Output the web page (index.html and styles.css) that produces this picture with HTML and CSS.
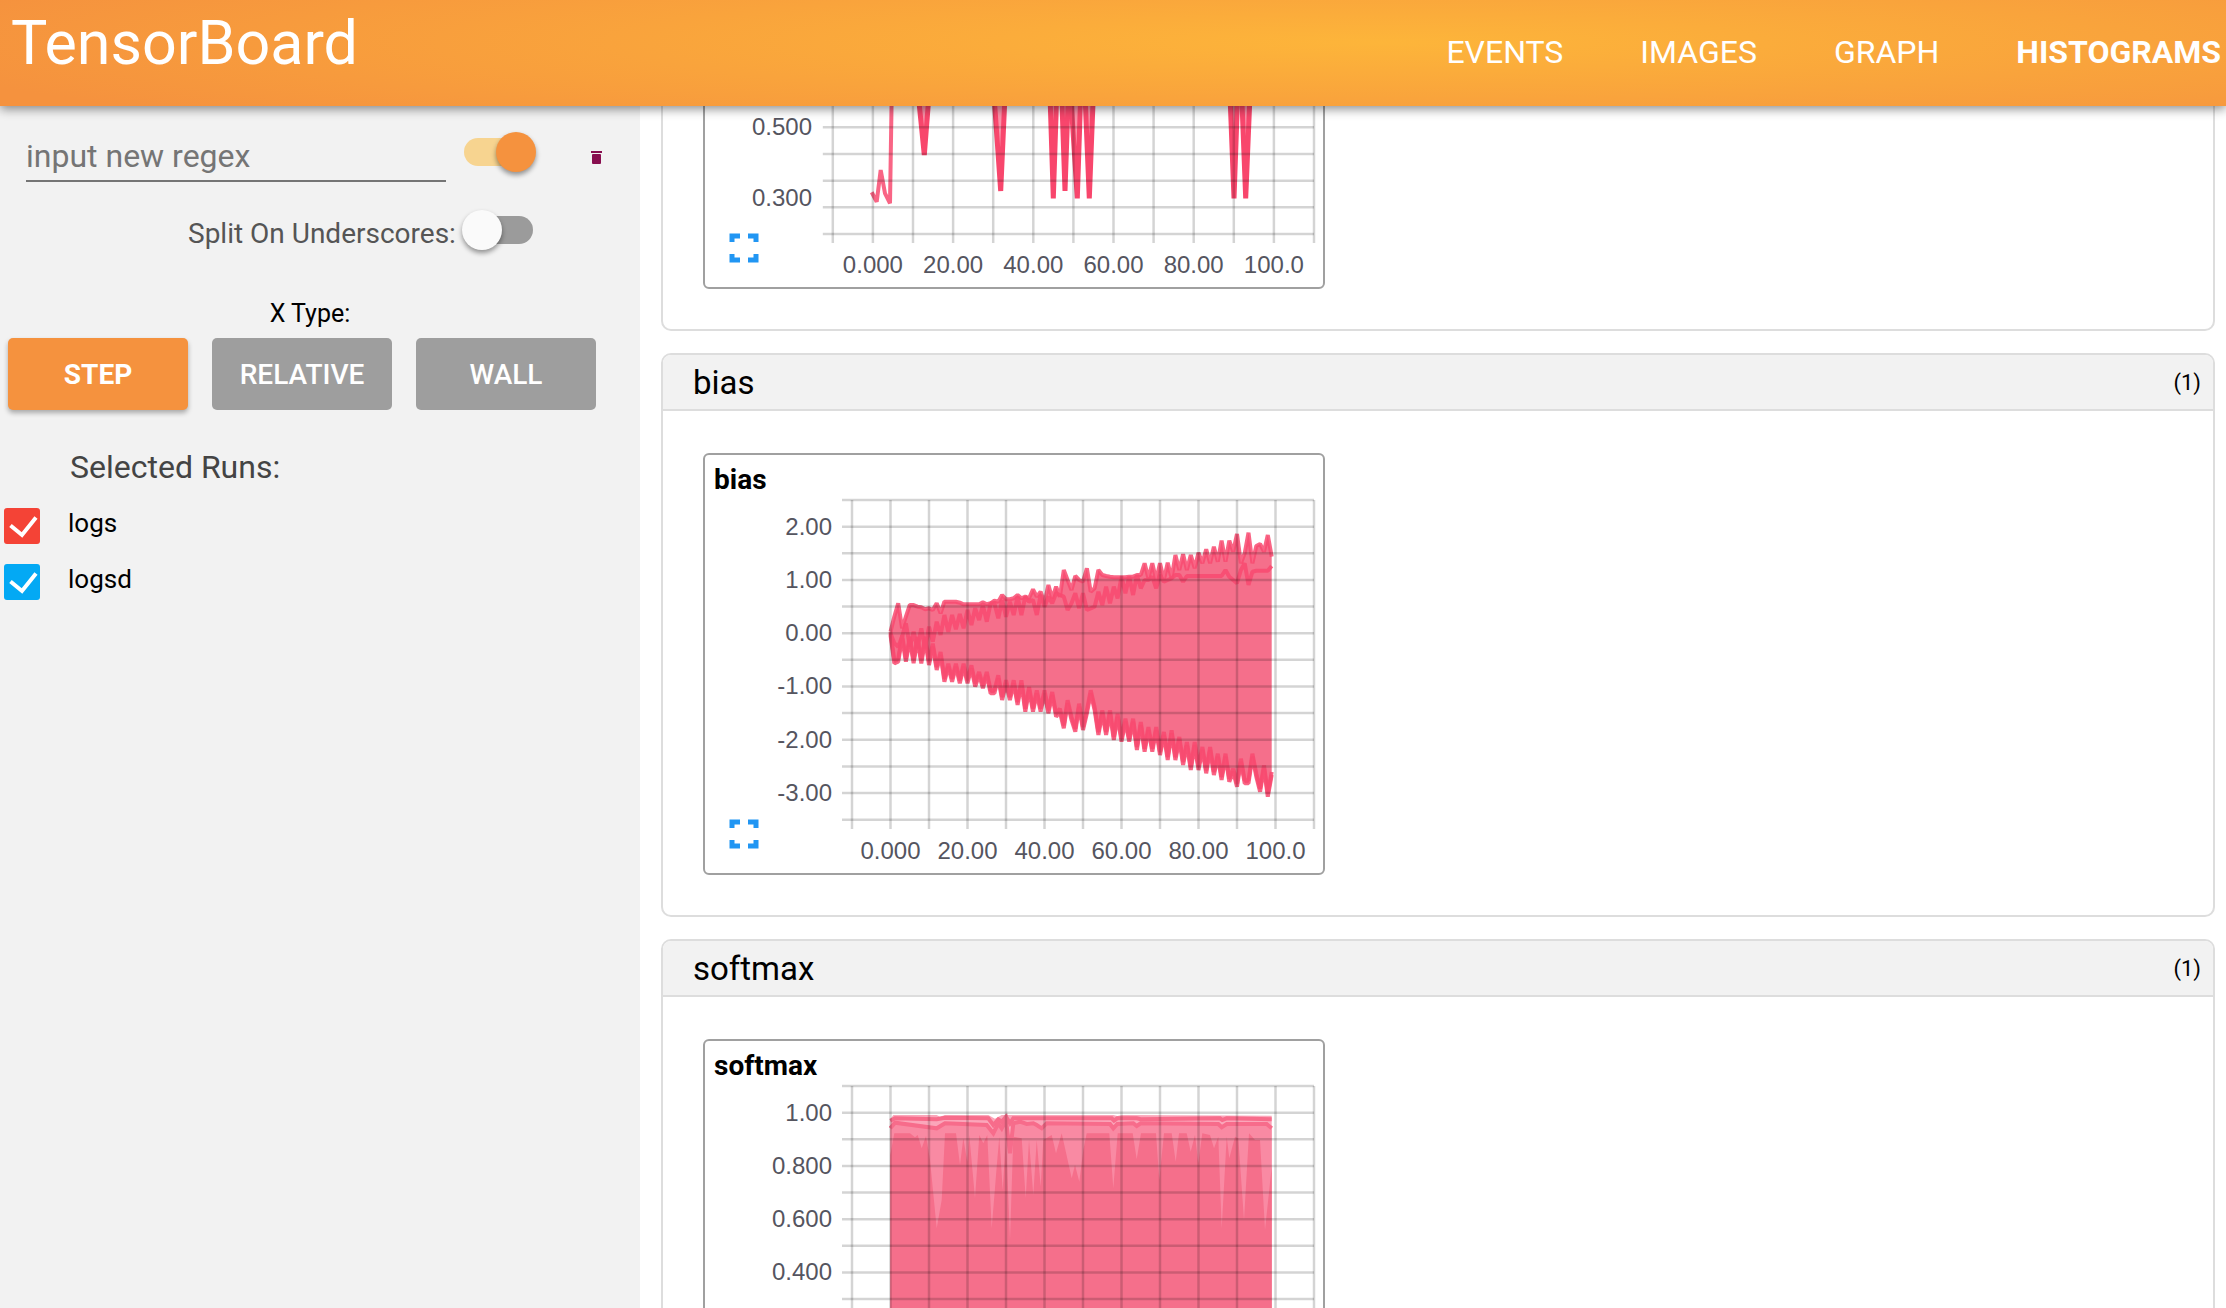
FILE: index.html
```html
<!DOCTYPE html>
<html lang="en">
<head>
    <meta charset="UTF-8">
    <title>TensorBoard</title>
    <link rel="stylesheet" href="styles.css">
</head>
<body>

    <header class="topbar">
        <div class="brand">TensorBoard</div>
        <nav class="tabs">
            <a class="tab">EVENTS</a>
            <a class="tab">IMAGES</a>
            <a class="tab">GRAPH</a>
            <a class="tab tab-active">HISTOGRAMS</a>
        </nav>
    </header>

    <div class="page">
        <aside class="sidebar">
            <div class="regex-row">
                <div class="regex-input">input new regex</div>
                <div class="toggle toggle-on"><span class="knob"></span></div>
                <svg class="trash" width="11" height="13" viewBox="0 0 11 13">
                    <rect x="0" y="0" width="11" height="2"></rect>
                    <rect x="1" y="3" width="9" height="10" rx="1"></rect>
                </svg>
            </div>
            <div class="split-row">
                <span class="split-label">Split On Underscores:</span>
                <div class="toggle"><span class="knob"></span></div>
            </div>
            <div class="xtype-label">X Type:</div>
            <div class="xtype-buttons">
                <button class="xtype-button xtype-active">STEP</button>
                <button class="xtype-button">RELATIVE</button>
                <button class="xtype-button">WALL</button>
            </div>
            <div class="runs-title">Selected Runs:</div>
            <div class="run">
                <span class="checkbox checkbox-red">
                    <svg width="36" height="36" viewBox="0 0 36 36"><path d="M6.5 17.5L18 27L32 9.5"></path></svg>
                </span>
                <span class="run-name">logs</span>
            </div>
            <div class="run">
                <span class="checkbox checkbox-blue">
                    <svg width="36" height="36" viewBox="0 0 36 36"><path d="M6.5 17.5L18 27L32 9.5"></path></svg>
                </span>
                <span class="run-name">logsd</span>
            </div>
        </aside>

        <main class="content">
            <!-- scrolled under the top bar, only the lower part of this one shows -->
            <section class="category category-cut">
                <div class="category-body">
                    <div class="card">
                        <svg class="plot" id="plot-top" viewBox="0 187 618 189"></svg>
                    </div>
                </div>
            </section>

            <section class="category">
                <div class="category-head"><span>bias</span><span class="count">(1)</span></div>
                <div class="category-body">
                    <div class="card">
                        <div class="card-title">bias</div>
                        <svg class="plot" id="plot-bias" viewBox="0 0 618 376"></svg>
                    </div>
                </div>
            </section>

            <section class="category">
                <div class="category-head"><span>softmax</span><span class="count">(1)</span></div>
                <div class="category-body">
                    <div class="card">
                        <div class="card-title">softmax</div>
                        <svg class="plot" id="plot-softmax" viewBox="0 0 618 376"></svg>
                    </div>
                </div>
            </section>
        </main>
    </div>

    <script src="chart.js"></script>
</body>
</html>
```

FILE: styles.css
```css
html, body {
    margin: 0;
    height: 100%;
    overflow: hidden;
    font-family: Roboto, "Noto Sans", sans-serif;
    background-color: #fff;
}
.topbar {
    position: relative;
    z-index: 2;
    display: flex;
    height: 106px;
    color: #fff;
    background: radial-gradient(ellipse 1500px 115px at 62% 40%, #fdb53a, #f5923e);
    box-shadow: 0 3px 10px rgba(0, 0, 0, 0.45);
}
.brand {
    margin-left: 11px;
    font-size: 61px;
    line-height: 86px;
}
.tabs {
    display: flex;
    gap: 77px;
    margin-left: auto;
    padding-right: 5px;
}
.tab {
    font-size: 32px;
    line-height: 105px;
}
.tab-active {
    font-weight: 700;
}
.page {
    display: flex;
    height: 1202px;
}
.sidebar {
    flex: none;
    width: 640px;
    box-sizing: border-box;
    padding-top: 26px;
    background-color: #f2f2f2;
}
.regex-row {
    display: flex;
    align-items: flex-start;
    padding-left: 26px;
}
.regex-input {
    box-sizing: border-box;
    width: 420px;
    height: 50px;
    border-bottom: 2px solid #757575;
    margin-right: 18px;
    font-size: 32px;
    line-height: 48px;
    color: #757575;
}
.toggle {
    position: relative;
    flex: none;
    width: 70px;
    height: 28px;
    border-radius: 14px;
    background-color: #9b9b9b;
}
.knob {
    position: absolute;
    top: -6px;
    left: -1px;
    width: 40px;
    height: 40px;
    border-radius: 50%;
    background-color: #fafafa;
    box-shadow: 0 3px 5px rgba(0, 0, 0, 0.4);
}
.regex-row .toggle {
    margin-top: 6px;
}
.toggle-on {
    background-color: #f7d490;
}
.toggle-on .knob {
    left: 32px;
    background-color: #f5923e;
}
.trash {
    margin: 19px 0 0 57px;
    fill: #880e4f;
}
.split-row {
    display: flex;
    align-items: center;
    height: 56px;
    margin-top: 20px;
    padding-left: 188px;
}
.split-label {
    margin-right: 7px;
    padding-top: 7px;
    font-size: 28px;
    color: #555;
}
.xtype-label {
    width: 620px;
    margin-top: 41px;
    font-size: 25px;
    line-height: 30px;
    text-align: center;
    color: #000;
}
.xtype-buttons {
    display: flex;
    gap: 24px;
    margin-top: 9px;
    padding-left: 8px;
}
.xtype-button {
    width: 180px;
    height: 72px;
    border: none;
    border-radius: 5px;
    padding: 0;
    font-family: inherit;
    font-size: 28px;
    font-weight: 500;
    color: #fff;
    background-color: #9e9e9e;
}
.xtype-active {
    font-weight: 700;
    background-color: #f5923e;
    box-shadow: 0 3px 5px rgba(0, 0, 0, 0.3);
}
.runs-title {
    margin: 37px 0 21px 70px;
    font-size: 32px;
    line-height: 40px;
    color: #444;
}
.run {
    display: flex;
    gap: 28px;
    margin: 0 0 20px 4px;
}
.checkbox {
    display: block;
    width: 36px;
    height: 36px;
    border-radius: 3px;
}
.checkbox svg {
    display: block;
    fill: none;
    stroke: #fff;
    stroke-width: 4;
}
.checkbox-red {
    background-color: #f44336;
}
.checkbox-blue {
    background-color: #03a9f4;
}
.run-name {
    font-size: 26px;
    line-height: 30px;
    color: #000;
}
.content {
    flex: 1;
    min-width: 0;
    padding: 0 11px 0 21px;
    overflow: hidden;
}
.category {
    border: 2px solid #ddd;
    border-radius: 10px;
    margin-bottom: 22px;
}
.category-cut {
    margin-top: -20px;
}
.category-head {
    display: flex;
    align-items: center;
    justify-content: space-between;
    box-sizing: border-box;
    height: 56px;
    padding: 0 12px 0 30px;
    border-bottom: 2px solid #ddd;
    border-radius: 8px 8px 0 0;
    font-size: 33px;
    color: #000;
    background-color: #f2f2f2;
}
.count {
    font-size: 22px;
}
.category-body {
    padding: 42px 0 40px 40px;
}
.category-cut .category-body {
    padding-top: 8px;
}
.card {
    box-sizing: border-box;
    width: 622px;
    height: 422px;
    border: 2px solid #a0a0a0;
    border-radius: 6px;
    background-color: #fff;
}
.category-cut .card {
    height: 193px;
}
.card-title {
    height: 42px;
    padding-left: 9px;
    font-size: 28px;
    font-weight: 700;
    line-height: 50px;
    color: #000;
}
.plot {
    display: block;
    width: 618px;
    height: 376px;
}
.category-cut .plot {
    height: 189px;
}
.grid-line {
    stroke: rgba(0, 0, 0, 0.17);
    stroke-width: 2.5;
}
.tick-label {
    font-family: "Liberation Sans", Arial, sans-serif;
    font-size: 24px;
    fill: #55555f;
}
.area {
    fill: #f56f8b;
}
.trace {
    fill: none;
    stroke: #f84a70;
    stroke-width: 4;
    stroke-linejoin: bevel;
    opacity: 0.85;
}
.dip {
    fill: rgba(248, 74, 112, 0.6);
    stroke: #f8466c;
    stroke-width: 5;
    stroke-linejoin: bevel;
}
.soft-top {
    fill: #fba6ba;
}
.soft-mid {
    fill: #f98aa3;
}
.soft-line {
    fill: none;
    stroke: #f76c8b;
    stroke-width: 4;
}
.expand {
    fill: none;
    stroke: #2196f3;
    stroke-width: 5;
}
```

FILE: chart.js
```javascript
// values below are pixel readings taken at 3x, so they get divided by 3 here
function traced(pts, ox, oy) {
    return pts.map(function(p) {
        return (ox + p[0] / 3).toFixed(1) + ',' + (oy + p[1] / 3).toFixed(1);
    }).join(' ');
}

function series(vals, firstIndex, oy) {
    return vals.map(function(v, i) {
        return [(firstIndex + i) * 3.85, oy + v / 3];
    });
}

function toPoints(list) {
    return list.map(function(p) {
        return (185.5 + p[0]).toFixed(1) + ',' + p[1].toFixed(1);
    }).join(' ');
}

function drawGrid(opts) {
    let out = '';
    for (let k = 0; k <= 12; k++) {
        const x = opts.left + k * opts.stepX;
        out += `<line class="grid-line" x1="${x}" x2="${x}" y1="3" y2="332"></line>`;
    }
    for (let k = 0; k <= 12; k++) {
        const y = 3 + k * opts.stepY;
        out += `<line class="grid-line" x1="${opts.left - 10}" x2="${opts.left + 12 * opts.stepX}" y1="${y}" y2="${y}"></line>`;
    }
    return out;
}

function drawYLabels(opts) {
    let out = '';
    opts.yLabels.forEach(function(text, i) {
        const y = 3 + (i * 2 + 1) * opts.stepY + 8;
        out += `<text class="tick-label" text-anchor="end" x="${opts.left - 20}" y="${y}">${text}</text>`;
    });
    return out;
}

function drawXAxis(opts) {
    let out = '';
    ['0.000', '20.00', '40.00', '60.00', '80.00', '100.0'].forEach(function(text, i) {
        const x = opts.left + (i * 2 + 1) * opts.stepX;
        out += `<text class="tick-label" text-anchor="middle" x="${x}" y="362">${text}</text>`;
    });
    out += '<path class="expand" d="M27 331V325H35M43 325H51V331M51 343V349H43M35 349H27V343"></path>';
    return out;
}

function topChart() {
    const ox = 145, oy = 194;
    const dips = [
        [[205, -30], [223, 150], [237, -30]],
        [[432, -30], [452, 258], [465, -30]],
        [[600, -30], [610, 280], [620, -30]],
        [[635, -30], [645, 258], [655, -30]],
        [[662, -30], [682, 280], [692, -30]],
        [[705, -30], [718, 280], [730, -30]],
        [[1140, -30], [1152, 280], [1163, -30]],
        [[1175, -30], [1187, 280], [1200, -30]]
    ];
    const opts = { left: 127.8, stepX: 40.1, stepY: 26.67 };
    let out = '';
    out += `<polyline class="trace" points="${traced([[65, 262], [80, 290], [92, 195], [105, 265], [120, 295], [125, -30]], ox, oy)}"></polyline>`;
    dips.forEach(function(d) {
        out += `<polygon class="dip" points="${traced(d, ox, oy)}"></polygon>`;
    });
    out += drawGrid(opts);
    out += drawXAxis(opts);
    out += '<text class="tick-label" text-anchor="end" x="107" y="224">0.500</text>';
    out += '<text class="tick-label" text-anchor="end" x="107" y="295">0.300</text>';
    document.getElementById('plot-top').innerHTML = out;
}

// bias
function biasChart() {
    const upper = series([215, 170, 130, 205, 170, 135, 135, 140, 142, 148, 145, 150, 130, 160, 125, 125, 125, 125, 128, 133, 133, 133, 133, 133, 127, 133, 130, 122, 125, 105, 118, 118, 115, 105, 115, 110, 115, 88, 110, 95, 130, 75, 115, 80, 110, 30, 60, 90, 48, 60, 65], 0, 63)
        .concat(series([145, 215, 205, 150, 165, 168, 170, 172, 172, 172, 172, 170, 170, 165, 165, 130, 175, 130, 180, 130, 180, 128, 175, 105, 150, 103, 150, 105, 145, 98, 130, 88, 130, 80, 125, 62, 125, 62, 95, 42, 130, 100, 38, 130, 78, 72, 95, 45, 110], 51, 23));
    const inner = series([220, 250, 260, 230, 190, 260, 215, 265, 205, 265, 200, 245, 185, 225, 165, 215, 165, 208, 162, 205, 150, 195, 145, 180, 135, 185, 130, 130, 175, 120, 170, 125, 165, 110, 165, 110, 125, 120, 165, 105, 140, 110, 130, 100, 105, 110, 150, 130, 100, 145, 100, 150], 0, 63)
        .concat(series([265, 260, 215, 255, 200, 250, 200, 235, 170, 220, 170, 225, 165, 205, 180, 180, 170, 205, 165, 185, 180, 175, 165, 165, 185, 168, 168, 168, 168, 168, 168, 168, 168, 168, 168, 150, 170, 180, 190, 150, 130, 195, 155, 152, 152, 152, 152, 138], 52, 23));
    const lower = series([225, 310, 305, 235, 305, 240, 310, 240, 310, 240, 315, 260, 330, 285, 365, 320, 365, 320, 370, 320, 370, 325, 380, 345, 385, 345, 400, 400, 355, 420, 370, 420, 370, 435, 370, 455, 390, 455, 400, 455, 400, 460, 405, 470, 455, 505, 430, 480, 515, 440], 0, 63)
        .concat(series([210, 160, 100, 150, 225, 160, 225, 160, 240, 170, 245, 185, 245, 185, 270, 195, 275, 210, 275, 210, 285, 225, 300, 220, 300, 240, 315, 255, 330, 255, 330, 270, 340, 270, 345, 290, 360, 290, 365, 335, 380, 305, 370, 370, 290, 350, 395, 325, 410, 345], 50, 163));
    const lowerInner = lower.map(function(p) {
        return [p[0], p[1] - 3];
    });
    const opts = {
        left: 147, stepX: 38.5, stepY: 26.64,
        yLabels: ['2.00', '1.00', '0.00', '-1.00', '-2.00', '-3.00']
    };
    let out = '';
    out += `<polygon class="area" points="${toPoints(upper.concat(lower.slice().reverse()))}"></polygon>`;
    out += `<polyline class="trace" points="${toPoints(upper)}"></polyline>`;
    out += `<polyline class="trace" points="${toPoints(inner)}"></polyline>`;
    out += `<polyline class="trace" points="${toPoints(lower)}"></polyline>`;
    out += `<polyline class="trace" points="${toPoints(lowerInner)}"></polyline>`;
    out += drawGrid(opts);
    out += drawYLabels(opts);
    out += drawXAxis(opts);
    document.getElementById('plot-bias').innerHTML = out;
}

// softmax
function softmaxChart() {
    const ox = 175, oy = 17, floor = 918;
    const top = [[31, 58], [40, 45], [170, 45], [180, 50], [195, 45], [325, 45], [345, 56], [365, 45], [600, 45], [700, 45], [712, 48], [725, 45], [1175, 47]];
    const upperLine = [[31, 62], [45, 55], [170, 58], [195, 53], [325, 55], [340, 75], [355, 58], [365, 65], [378, 50], [390, 70], [400, 55], [695, 55], [702, 62], [712, 55], [770, 55], [782, 58], [1020, 55], [1027, 60], [1040, 55], [1175, 58]];
    const lowerLine = [[31, 85], [45, 68], [170, 85], [195, 70], [320, 75], [340, 100], [355, 70], [365, 85], [378, 60], [390, 160], [400, 70], [420, 65], [440, 72], [460, 70], [470, 75], [485, 85], [500, 70], [690, 72], [700, 85], [712, 72], [760, 70], [770, 78], [782, 70], [1015, 72], [1025, 82], [1040, 72], [1160, 72], [1175, 85]];
    const edge = [[31, 165], [43, 100], [90, 100], [105, 112], [113, 105], [125, 145], [138, 108], [150, 180], [170, 385], [185, 300], [195, 100], [228, 100], [240, 195], [250, 115], [262, 185], [268, 105], [285, 295], [298, 105], [310, 130], [322, 105], [335, 385], [350, 200], [358, 110], [368, 270], [378, 110], [390, 420], [400, 110], [425, 115], [437, 295], [447, 120], [460, 285], [470, 120], [482, 260], [490, 120], [515, 105], [528, 160], [545, 100], [575, 235], [585, 195], [598, 245], [610, 150], [620, 100], [688, 100], [700, 265], [713, 100], [758, 100], [770, 178], [783, 100], [828, 100], [838, 240], [852, 100], [875, 100], [887, 185], [897, 100], [920, 100], [932, 155], [945, 105], [955, 190], [967, 100], [990, 105], [1002, 145], [1015, 110], [1025, 385], [1040, 110], [1048, 175], [1065, 110], [1075, 115], [1092, 360], [1107, 100], [1125, 120], [1140, 120], [1155, 390], [1175, 200]];
    const closed = function(list) {
        return list.concat([[1175, floor], [31, floor]]);
    };
    const opts = {
        left: 147, stepX: 38.5, stepY: 26.64,
        yLabels: ['1.00', '0.800', '0.600', '0.400']
    };
    let out = '';
    out += `<polygon class="soft-top" points="${traced(closed(top), ox, oy)}"></polygon>`;
    out += `<polygon class="soft-mid" points="${traced(closed(lowerLine), ox, oy)}"></polygon>`;
    out += `<polygon class="area" points="${traced(closed(edge), ox, oy)}"></polygon>`;
    out += `<polyline class="soft-line" points="${traced(upperLine, ox, oy)}"></polyline>`;
    out += `<polyline class="soft-line" points="${traced(lowerLine, ox, oy)}"></polyline>`;
    out += drawGrid(opts);
    out += drawYLabels(opts);
    document.getElementById('plot-softmax').innerHTML = out;
}

topChart();
biasChart();
softmaxChart();
```
